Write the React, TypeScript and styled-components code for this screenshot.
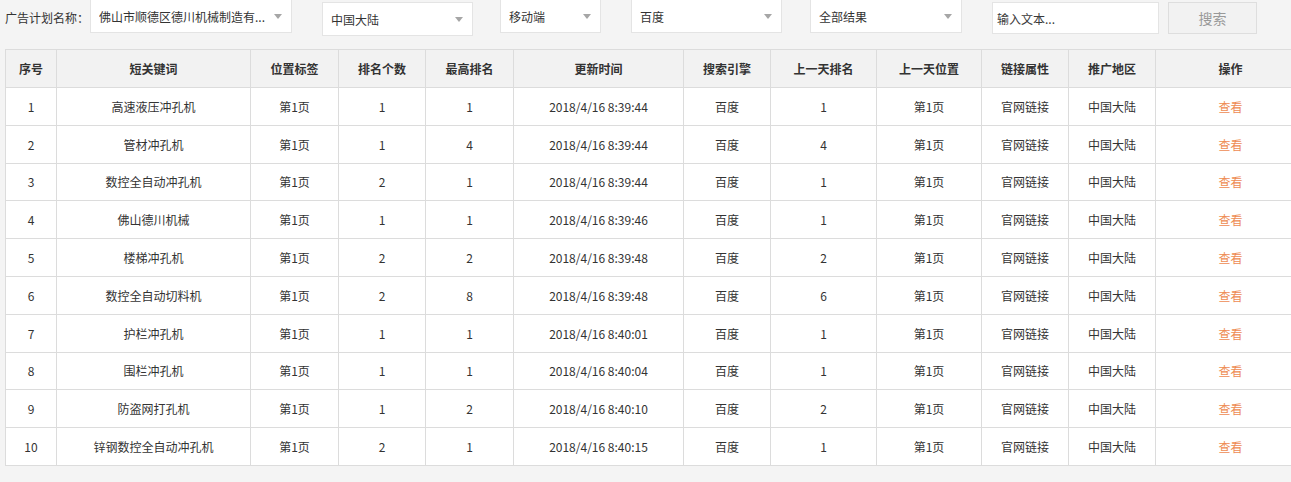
import React from "react";
import styled, { createGlobalStyle } from "styled-components";

const GlobalStyle = createGlobalStyle`
  html, body {
    margin: 0;
    padding: 0;
    background: #f4f4f4;
    overflow: hidden;
  }
  body {
    font-family: "Microsoft YaHei", "Noto Sans CJK SC", "Noto Sans", sans-serif;
    font-size: 12px;
    color: #333;
  }
  * { box-sizing: border-box; }
`;

const Page = styled.div`
  width: 1310px;
  padding-left: 5px;
`;

const Toolbar = styled.div`
  display: flex;
  align-items: flex-start;
  height: 49px;
`;

const Label = styled.span`
  margin-top: 10px;
  line-height: 16px;
  font-size: 12px;
  color: #333;
  white-space: nowrap;
  width: 85px;
`;

const Select = styled.div<{ $w: number; $top: number; $ml: number }>`
  width: ${(p) => p.$w}px;
  height: 34px;
  margin-top: ${(p) => p.$top}px;
  margin-left: ${(p) => p.$ml}px;
  background: #fff;
  border: 1px solid #e4e4e4;
  display: flex;
  align-items: center;
  padding-left: 8px;
  padding-right: 9px;
  font-size: 12px;
  color: #333;
`;

const SelectText = styled.span`
  flex: 1;
  white-space: nowrap;
  overflow: hidden;
`;

const Caret = styled.span`
  width: 0;
  height: 0;
  border-left: 4.5px solid transparent;
  border-right: 4.5px solid transparent;
  border-top: 5px solid #a6a6a6;
`;

const TextInput = styled.input`
  width: 167px;
  height: 32px;
  margin-top: 2px;
  margin-left: 30px;
  border: 1px solid #e4e4e4;
  background: #fff;
  padding: 0 4px;
  font-family: inherit;
  font-size: 12px;
  color: #333;
  outline: none;
  &::placeholder {
    color: #3a3a3a;
  }
`;

const SearchButton = styled.button`
  width: 89px;
  height: 32px;
  margin-top: 2px;
  margin-left: 9px;
  border: 1px solid #dedede;
  background: #f2f2f2;
  color: #999;
  font-family: inherit;
  font-size: 14px;
  padding: 0;
`;

const Table = styled.table`
  border-collapse: collapse;
  table-layout: fixed;
  width: 1300px;
  background: #fff;
`;

const HeadCell = styled.th`
  height: 38px;
  padding: 0;
  border: 1px solid #dcdcdc;
  background: #f2f2f2;
  font-weight: bold;
  font-size: 12px;
  color: #333;
  text-align: center;
`;

const Cell = styled.td<{ $link?: boolean }>`
  height: 37.8px;
  padding: 0;
  border: 1px solid #dcdcdc;
  text-align: center;
  font-size: 12px;
  color: ${(p) => (p.$link ? "#ee8c52" : "#333")};
  white-space: nowrap;
`;

const cols = [51, 194, 88, 87, 88, 170, 87, 106, 105, 87, 87, 150];
const heads = [
  "序号",
  "短关键词",
  "位置标签",
  "排名个数",
  "最高排名",
  "更新时间",
  "搜索引擎",
  "上一天排名",
  "上一天位置",
  "链接属性",
  "推广地区",
  "操作",
];

const rows: [string, string, string, string, string][] = [
  ["高速液压冲孔机", "1", "1", "8:39:44", "1"],
  ["管材冲孔机", "1", "4", "8:39:44", "4"],
  ["数控全自动冲孔机", "2", "1", "8:39:44", "1"],
  ["佛山德川机械", "1", "1", "8:39:46", "1"],
  ["楼梯冲孔机", "2", "2", "8:39:48", "2"],
  ["数控全自动切料机", "2", "8", "8:39:48", "6"],
  ["护栏冲孔机", "1", "1", "8:40:01", "1"],
  ["围栏冲孔机", "1", "1", "8:40:04", "1"],
  ["防盗网打孔机", "1", "2", "8:40:10", "2"],
  ["锌钢数控全自动冲孔机", "2", "1", "8:40:15", "1"],
];

export default function App() {
  return (
    <Page>
      <GlobalStyle />
      <Toolbar>
        <Label>广告计划名称：</Label>
        <Select $w={202} $top={-1} $ml={0}>
          <SelectText>佛山市顺德区德川机械制造有...</SelectText>
          <Caret />
        </Select>
        <Select $w={151} $top={2} $ml={30}>
          <SelectText>中国大陆</SelectText>
          <Caret />
        </Select>
        <Select $w={101} $top={-1} $ml={27}>
          <SelectText>移动端</SelectText>
          <Caret />
        </Select>
        <Select $w={151} $top={-1} $ml={30}>
          <SelectText>百度</SelectText>
          <Caret />
        </Select>
        <Select $w={152} $top={-1} $ml={28}>
          <SelectText>全部结果</SelectText>
          <Caret />
        </Select>
        <TextInput placeholder="输入文本..." />
        <SearchButton>搜索</SearchButton>
      </Toolbar>
      <Table>
        <colgroup>
          {cols.map((w, i) => (
            <col key={i} style={{ width: w }} />
          ))}
        </colgroup>
        <thead>
          <tr>
            {heads.map((h) => (
              <HeadCell key={h}>{h}</HeadCell>
            ))}
          </tr>
        </thead>
        <tbody>
          {rows.map((r, i) => (
            <tr key={i}>
              <Cell>{i + 1}</Cell>
              <Cell>{r[0]}</Cell>
              <Cell>第1页</Cell>
              <Cell>{r[1]}</Cell>
              <Cell>{r[2]}</Cell>
              <Cell>2018/4/16 {r[3]}</Cell>
              <Cell>百度</Cell>
              <Cell>{r[4]}</Cell>
              <Cell>第1页</Cell>
              <Cell>官网链接</Cell>
              <Cell>中国大陆</Cell>
              <Cell $link>查看</Cell>
            </tr>
          ))}
        </tbody>
      </Table>
    </Page>
  );
}
